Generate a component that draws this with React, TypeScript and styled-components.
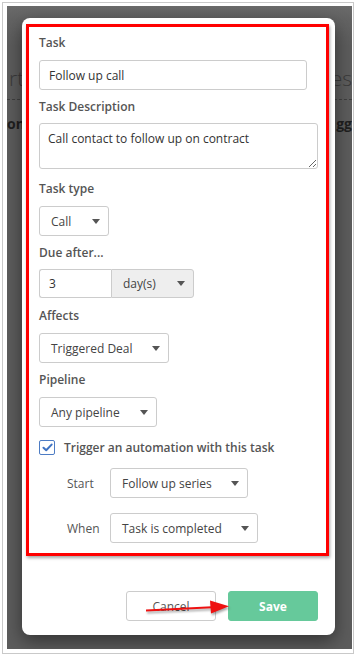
import styled, { createGlobalStyle } from "styled-components";

const GlobalStyle = createGlobalStyle`
  html, body {
    margin: 0;
    padding: 0;
    background: #ffffff;
    font-family: "Open Sans", "Noto Sans", sans-serif;
  }
`;

const Page = styled.div`
  width: 358px;
  height: 657px;
  padding: 2px 4px 3px 2px;
  box-sizing: border-box;
`;

const Frame = styled.div`
  height: 100%;
  border: 1px solid #c9c9c9;
  padding: 3px 1px 4px 4px;
  box-sizing: border-box;
  background: #ffffff;
`;

const Backdrop = styled.div`
  position: relative;
  height: 100%;
  overflow: hidden;
  background: linear-gradient(#6a6a6a 0px, #636363 14px, #5c5c5c 40px, #5c5c5c 100%);
`;

const BgHeader = styled.div`
  display: flex;
  justify-content: space-between;
  padding: 58px 0 0 2px;
  font-size: 21px;
  font-weight: 300;
  color: #3a3a3a;
  line-height: 28px;
`;

const BgDivider = styled.div`
  margin-top: 7px;
  border-top: 1px dashed #3f3f3f;
`;

const BgRow = styled.div`
  display: flex;
  justify-content: space-between;
  padding: 14px 0 0 0;
  font-size: 14px;
  font-weight: 700;
  color: #1f1f1f;
`;

const Modal = styled.div`
  position: absolute;
  left: 15px;
  top: 12px;
  width: 313px;
  height: 617px;
  background: #ffffff;
  border-radius: 8px;
  box-shadow: 0 6px 18px rgba(0, 0, 0, 0.45);
  padding: 6px 6px 0 4px;
  box-sizing: border-box;
  display: flex;
  flex-direction: column;
`;

const Highlight = styled.div`
  border: 3px solid #ff0000;
  box-shadow: 1px 2px 3px rgba(0, 0, 0, 0.35);
  padding: 8px 8px 10px 10px;
  display: flex;
  flex-direction: column;
`;

const Group = styled.div<{ $gap?: number }>`
  display: flex;
  flex-direction: column;
  margin-bottom: ${(p) => p.$gap ?? 9}px;
`;

const Label = styled.div<{ $tight?: boolean }>`
  font-size: 12px;
  font-weight: 600;
  line-height: 16px;
  color: #555555;
  margin-bottom: ${(p) => (p.$tight ? 8 : 9)}px;
`;

const TextInput = styled.input<{ $width: number }>`
  width: ${(p) => p.$width}px;
  height: 30px;
  box-sizing: border-box;
  border: 1px solid #cccccc;
  border-radius: 3px;
  padding: 0 9px;
  font-family: inherit;
  font-size: 12px;
  color: #333333;
  outline: none;
`;

const TextArea = styled.textarea`
  width: 279px;
  height: 46px;
  box-sizing: border-box;
  border: 1px solid #cccccc;
  border-radius: 3px;
  padding: 7px 8px;
  font-family: inherit;
  font-size: 12px;
  line-height: 16px;
  color: #333333;
  resize: vertical;
  outline: none;
`;

const Select = styled.div<{ $width: number; $muted?: boolean; $joined?: boolean }>`
  width: ${(p) => p.$width}px;
  height: 30px;
  box-sizing: border-box;
  display: flex;
  align-items: center;
  justify-content: space-between;
  padding: 0 8px 0 11px;
  border: 1px solid #cccccc;
  border-radius: ${(p) => (p.$joined ? "0 3px 3px 0" : "3px")};
  background: ${(p) => (p.$muted ? "#eeeeee" : "#ffffff")};
  font-size: 12px;
  color: #444444;
`;

const Caret = styled.span`
  width: 0;
  height: 0;
  border-left: 4.5px solid transparent;
  border-right: 4.5px solid transparent;
  border-top: 5px solid #555555;
`;

const Joined = styled.div`
  display: flex;
  input {
    border-radius: 3px 0 0 3px;
    border-right: none;
    width: 72px;
    height: 29px;
  }
  div {
    height: 29px;
  }
`;

const CheckRow = styled.label`
  display: flex;
  align-items: center;
  gap: 9px;
  margin-top: 3px;
  font-size: 12px;
  font-weight: 600;
  color: #555555;
`;

const CheckBox = styled.span`
  width: 16px;
  height: 15px;
  box-sizing: border-box;
  border: 1px solid #4d7cc4;
  border-radius: 2px;
  display: flex;
  align-items: center;
  justify-content: center;
`;

const SubRow = styled.div<{ $top: number }>`
  display: flex;
  align-items: center;
  padding-left: 28px;
  margin-top: ${(p) => p.$top}px;
`;

const SubLabel = styled.span`
  width: 43px;
  font-size: 12px;
  color: #555555;
`;

const Footer = styled.div`
  position: relative;
  display: flex;
  justify-content: flex-end;
  gap: 12px;
  padding: 35px 11px 0 0;
`;

const Button = styled.button<{ $primary?: boolean }>`
  width: 90px;
  height: 30px;
  box-sizing: border-box;
  border-radius: 3px;
  font-family: inherit;
  font-size: 12px;
  font-weight: ${(p) => (p.$primary ? 700 : 400)};
  color: ${(p) => (p.$primary ? "#ffffff" : "#555555")};
  background: ${(p) => (p.$primary ? "#66c99b" : "#ffffff")};
  border: 1px solid ${(p) => (p.$primary ? "#66c99b" : "#cccccc")};
`;

const Arrow = styled.svg`
  position: absolute;
  left: 120px;
  top: 42px;
  filter: drop-shadow(1px 2px 1px rgba(0, 0, 0, 0.35));
`;

const Dropdown = ({ value, width, muted, joined }: { value: string; width: number; muted?: boolean; joined?: boolean }) => (
  <Select $width={width} $muted={muted} $joined={joined}>
    <span>{value}</span>
    <Caret />
  </Select>
);

export default function App() {
  return (
    <>
      <GlobalStyle />
      <Page>
        <Frame>
          <Backdrop>
            <BgHeader>
              <span>rt</span>
              <span>es</span>
            </BgHeader>
            <BgDivider />
            <BgRow>
              <span>on</span>
              <span>gg</span>
            </BgRow>
            <Modal>
              <Highlight>
                <Group>
                  <Label>Task</Label>
                  <TextInput $width={268} readOnly value="Follow up call" />
                </Group>
                <Group $gap={12}>
                  <Label $tight>Task Description</Label>
                  <TextArea readOnly value="Call contact to follow up on contract" />
                </Group>
                <Group>
                  <Label>Task type</Label>
                  <Dropdown value="Call" width={70} />
                </Group>
                <Group $gap={10}>
                  <Label $tight>Due after...</Label>
                  <Joined>
                    <TextInput $width={72} readOnly value="3" />
                    <Dropdown value="day(s)" width={83} muted joined />
                  </Joined>
                </Group>
                <Group>
                  <Label>Affects</Label>
                  <Dropdown value="Triggered Deal" width={130} />
                </Group>
                <Group>
                  <Label>Pipeline</Label>
                  <Dropdown value="Any pipeline" width={118} />
                </Group>
                <CheckRow>
                  <CheckBox>
                    <svg width="11" height="9" viewBox="0 0 11 9">
                      <path d="M1.5 4.8 L4.2 7.3 L9.6 1.6" fill="none" stroke="#3f73c3" strokeWidth="2" strokeLinecap="round" strokeLinejoin="round" />
                    </svg>
                  </CheckBox>
                  Trigger an automation with this task
                </CheckRow>
                <SubRow $top={12}>
                  <SubLabel>Start</SubLabel>
                  <Dropdown value="Follow up series" width={138} />
                </SubRow>
                <SubRow $top={15}>
                  <SubLabel>When</SubLabel>
                  <Dropdown value="Task is completed" width={148} />
                </SubRow>
              </Highlight>
              <Footer>
                <Button>Cancel</Button>
                <Button $primary>Save</Button>
                <Arrow width="86" height="18" viewBox="0 0 86 18">
                  <path d="M0 12.5 L66 9.2" stroke="#ee1111" strokeWidth="2" fill="none" />
                  <path d="M64 2.5 L83 8.2 L65 15.5 Z" fill="#ee1111" />
                </Arrow>
              </Footer>
            </Modal>
          </Backdrop>
        </Frame>
      </Page>
    </>
  );
}
